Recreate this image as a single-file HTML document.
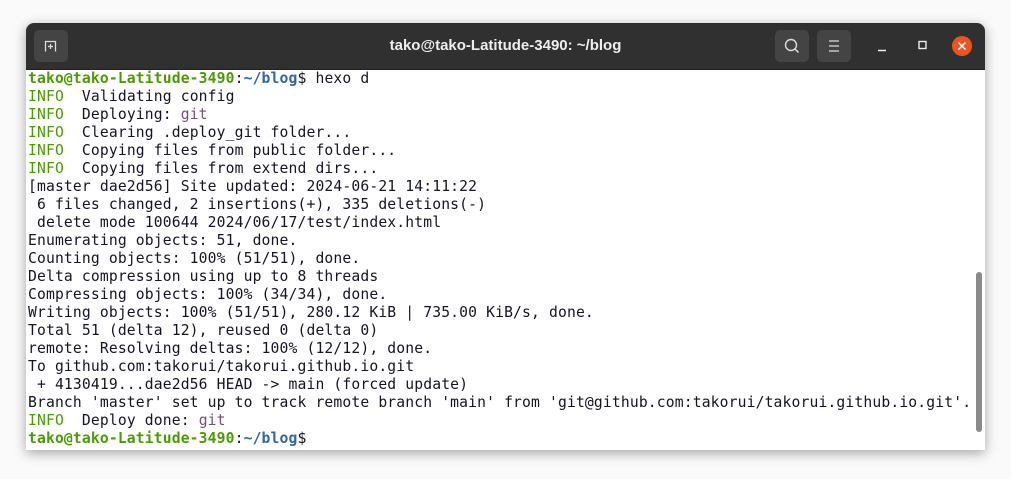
<!DOCTYPE html>
<html><head><meta charset="utf-8"><style>
body{margin:0;width:1011px;height:479px;background:#fafafa;overflow:hidden;position:relative;font-family:"Liberation Sans",sans-serif}
.win{position:absolute;left:26px;top:23px;width:959px;height:427px;background:#fff;border-radius:8px 8px 0 0;box-shadow:0 3px 12px rgba(0,0,0,.35);overflow:hidden}
.bar{position:absolute;left:0;top:0;width:959px;height:46px;background:#303030;border-bottom:1px solid #1f1f1f}
.btn{position:absolute;top:7px;width:34px;height:32px;background:#444;border-radius:5px}
.title{position:absolute;left:0;right:0;top:14px;text-align:center;color:#eee;font-weight:bold;font-size:15px}
pre{position:absolute;left:2px;top:47px;margin:0;font-family:"DejaVu Sans Mono","Liberation Mono",monospace;font-size:14.7px;line-height:18px;letter-spacing:0.14px;color:#171421}
.g{color:#4e9a06}.b{color:#3465a4;font-weight:bold}.gb{color:#4e9a06;font-weight:bold}.p{color:#75507b}
.sb{position:absolute;left:950px;top:249px;width:6px;height:160px;background:#8a8a8a;border-radius:3px}
</style></head><body>
<div class="win">
<div class="bar">
<div class="btn" style="left:8px"><svg width="34" height="32"><path d="M11.5 21.5V11.5h10v10M16.5 14v5M14 16.5h5" stroke="#ddd" stroke-width="1.3" fill="none"/></svg></div>
<div class="title">tako@tako-Latitude-3490: ~/blog</div>
<div class="btn" style="left:749px"><svg width="34" height="32"><circle cx="16" cy="15" r="5.5" stroke="#ddd" stroke-width="1.4" fill="none"/><path d="M20 19l3.5 3.5" stroke="#ddd" stroke-width="1.5"/></svg></div>
<div class="btn" style="left:791px"><svg width="34" height="32"><path d="M12 11h10M12 16h10M12 21h10" stroke="#ddd" stroke-width="1.3"/></svg></div>
<svg style="position:absolute;left:840px;top:10px" width="110" height="26"><path d="M12 17.5h8" stroke="#eee" stroke-width="1.5"/><rect x="53" y="8.5" width="7" height="7" stroke="#eee" stroke-width="1.4" fill="none"/><circle cx="96" cy="13" r="10" fill="#e95420"/><path d="M92.5 9.5l7 7M99.5 9.5l-7 7" stroke="#fff" stroke-width="1.5"/></svg>
</div>
<pre><span class="gb">tako@tako-Latitude-3490</span>:<span class="b">~/blog</span>$ hexo d
<span class="g">INFO</span>  Validating config
<span class="g">INFO</span>  Deploying: <span class="p">git</span>
<span class="g">INFO</span>  Clearing .deploy_git folder...
<span class="g">INFO</span>  Copying files from public folder...
<span class="g">INFO</span>  Copying files from extend dirs...
[master dae2d56] Site updated: 2024-06-21 14:11:22
 6 files changed, 2 insertions(+), 335 deletions(-)
 delete mode 100644 2024/06/17/test/index.html
Enumerating objects: 51, done.
Counting objects: 100% (51/51), done.
Delta compression using up to 8 threads
Compressing objects: 100% (34/34), done.
Writing objects: 100% (51/51), 280.12 KiB | 735.00 KiB/s, done.
Total 51 (delta 12), reused 0 (delta 0)
remote: Resolving deltas: 100% (12/12), done.
To github.com:takorui/takorui.github.io.git
 + 4130419...dae2d56 HEAD -&gt; main (forced update)
Branch 'master' set up to track remote branch 'main' from 'git@github.com:takorui/takorui.github.io.git'.
<span class="g">INFO</span>  Deploy done: <span class="p">git</span>
<span class="gb">tako@tako-Latitude-3490</span>:<span class="b">~/blog</span>$</pre>
<div class="sb"></div>
</div>
</body></html>
